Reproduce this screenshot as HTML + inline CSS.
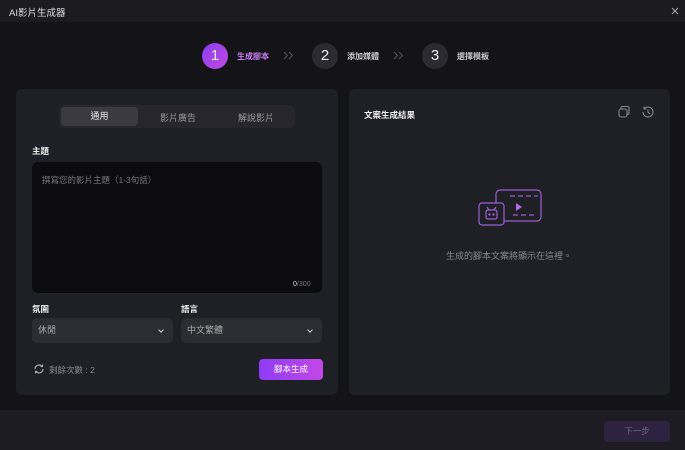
<!DOCTYPE html>
<html><head><meta charset="utf-8"><style>
*{margin:0;padding:0;box-sizing:border-box}
body{width:685px;height:450px;background:#131318;font-family:"Liberation Sans","Noto Sans CJK TC",sans-serif;color:#ddd;position:relative;overflow:hidden;font-size:9px}
.abs{position:absolute}
.title{left:0;top:0;width:685px;height:22px;background:#1b1b20}
.panel{background:#1f1f26;border-radius:6px}
.step{width:26px;height:26px;border-radius:50%;background:#2a2a30;color:#eee;font-size:15px;text-align:center;line-height:26px}
.sel{background:#2c2c33;border-radius:5px;height:25px;color:#aaa;font-size:9px;line-height:25px;padding-left:6px}
.chev{position:absolute;right:10px;top:10px;width:4px;height:4px;border-right:1.2px solid #ccc;border-bottom:1.2px solid #ccc;transform:rotate(45deg)}
.lbl{font-size:8.5px;font-weight:bold;color:#eee}
</style></head><body>
<div class="abs title"></div>
<div class="abs" style="left:9px;top:5px;font-size:9.5px;color:#ddd">AI影片生成器</div>
<svg class="abs" style="left:671px;top:7px" width="8" height="8" viewBox="0 0 8 8" stroke="#aaa" stroke-width="1"><path d="M1 1l6 6M7 1l-6 6"/></svg>

<div class="abs step" style="left:202px;top:43px;background:linear-gradient(135deg,#8a3cf0,#c04be0)">1</div>
<div class="abs" style="left:237px;top:51px;font-size:8px;font-weight:bold;color:#c77ef0">生成腳本</div>
<svg class="abs" style="left:283px;top:51px" width="12" height="9" viewBox="0 0 12 9" fill="none" stroke="#555" stroke-width="1"><path d="M1 1l3.5 3.5L1 8M6 1l3.5 3.5L6 8"/></svg>
<div class="abs step" style="left:312px;top:43px">2</div>
<div class="abs" style="left:347px;top:51px;font-size:8px;font-weight:bold;color:#ccc">添加媒體</div>
<svg class="abs" style="left:393px;top:51px" width="12" height="9" viewBox="0 0 12 9" fill="none" stroke="#555" stroke-width="1"><path d="M1 1l3.5 3.5L1 8M6 1l3.5 3.5L6 8"/></svg>
<div class="abs step" style="left:422px;top:43px">3</div>
<div class="abs" style="left:457px;top:51px;font-size:8px;font-weight:bold;color:#ccc">選擇模板</div>

<div class="abs panel" style="left:16px;top:89px;width:322px;height:306px"></div>
<div class="abs panel" style="left:349px;top:89px;width:321px;height:306px"></div>

<div class="abs" style="left:59px;top:105px;width:236px;height:23px;background:#26262c;border-radius:5px"></div>
<div class="abs" style="left:61px;top:107px;width:77px;height:19px;background:#3a3a40;border-radius:4px;text-align:center;line-height:19px;font-size:9px;color:#eee">通用</div>
<div class="abs" style="left:160px;top:111px;font-size:9px;color:#999">影片廣告</div>
<div class="abs" style="left:238px;top:111px;font-size:9px;color:#999">解說影片</div>

<div class="abs lbl" style="left:32px;top:145px">主題</div>
<div class="abs" style="left:32px;top:162px;width:290px;height:131px;background:#0c0c0f;border-radius:6px"></div>
<div class="abs" style="left:42px;top:174px;font-size:8.5px;color:#777">撰寫您的影片主題（1-3句話）</div>
<div class="abs" style="left:293px;top:281px;font-size:7px;color:#777"><span style="color:#ddd">0</span>/300</div>

<div class="abs lbl" style="left:32px;top:303px">氛圍</div>
<div class="abs lbl" style="left:181px;top:303px">語言</div>
<div class="abs sel" style="left:32px;top:318px;width:141px">休閒<div class="chev"></div></div>
<div class="abs sel" style="left:181px;top:318px;width:141px">中文繁體<div class="chev"></div></div>

<svg class="abs" style="left:33px;top:363px" width="12" height="12" viewBox="0 0 12 12" fill="none" stroke="#aaa" stroke-width="1.2"><path d="M2 6a4 4 0 0 1 7-2.6M10 6a4 4 0 0 1-7 2.6"/><path d="M9.5 1.5v2h-2M2.5 10.5v-2h2"/></svg>
<div class="abs" style="left:49px;top:364px;font-size:8.5px;color:#888">剩餘次數 : 2</div>
<div class="abs" style="left:259px;top:359px;width:64px;height:21px;border-radius:4px;background:linear-gradient(90deg,#8d3cf5,#c347e6);color:#fff;font-size:8.5px;text-align:center;line-height:21px">腳本生成</div>

<div class="abs lbl" style="left:364px;top:109px">文案生成結果</div>
<svg class="abs" style="left:617px;top:105px" width="14" height="14" viewBox="0 0 14 14" fill="none" stroke="#888" stroke-width="1.1"><rect x="2" y="4" width="8" height="8" rx="2"/><path d="M4 3.5V3a1.5 1.5 0 0 1 1.5-1.5h5A1.5 1.5 0 0 1 12 3v5a1.5 1.5 0 0 1-1.5 1.5"/></svg>
<svg class="abs" style="left:641px;top:105px" width="14" height="14" viewBox="0 0 14 14" fill="none" stroke="#888" stroke-width="1.1"><path d="M3 4a5 5 0 1 1-1 3"/><path d="M3 1.5V4h2.5"/><path d="M7 4.5V7l2 2"/></svg>

<svg class="abs" style="left:476px;top:188px" width="68" height="40" viewBox="0 0 68 40" fill="none" stroke="#9a5fd0" stroke-width="1.2"><rect x="20" y="2" width="45" height="31" rx="4"/><path d="M34 8h5M42 8h5M50 8h5M58 8h4M37 27h5M45 27h5M53 27h5" /><path d="M40 15l6 4-6 4z" fill="#b26be8" stroke="none"/><rect x="3" y="15" width="25" height="22" rx="3" fill="#1f1f26"/><rect x="10" y="22" width="11" height="9" rx="2"/><path d="M13 22l-2-3M18 22l2-3"/><circle cx="13.5" cy="26.5" r=".6" fill="#9a5fd0"/><circle cx="17.5" cy="26.5" r=".6" fill="#9a5fd0"/></svg>
<div class="abs" style="left:446px;top:249px;font-size:9px;color:#888">生成的腳本文案將顯示在這裡。</div>

<div class="abs" style="left:0;top:410px;width:685px;height:40px;background:#1c1c22"></div>
<div class="abs" style="left:604px;top:421px;width:66px;height:21px;border-radius:4px;background:#2d2240;color:#6f6585;font-size:8.5px;text-align:center;line-height:21px">下一步</div>
</body></html>
